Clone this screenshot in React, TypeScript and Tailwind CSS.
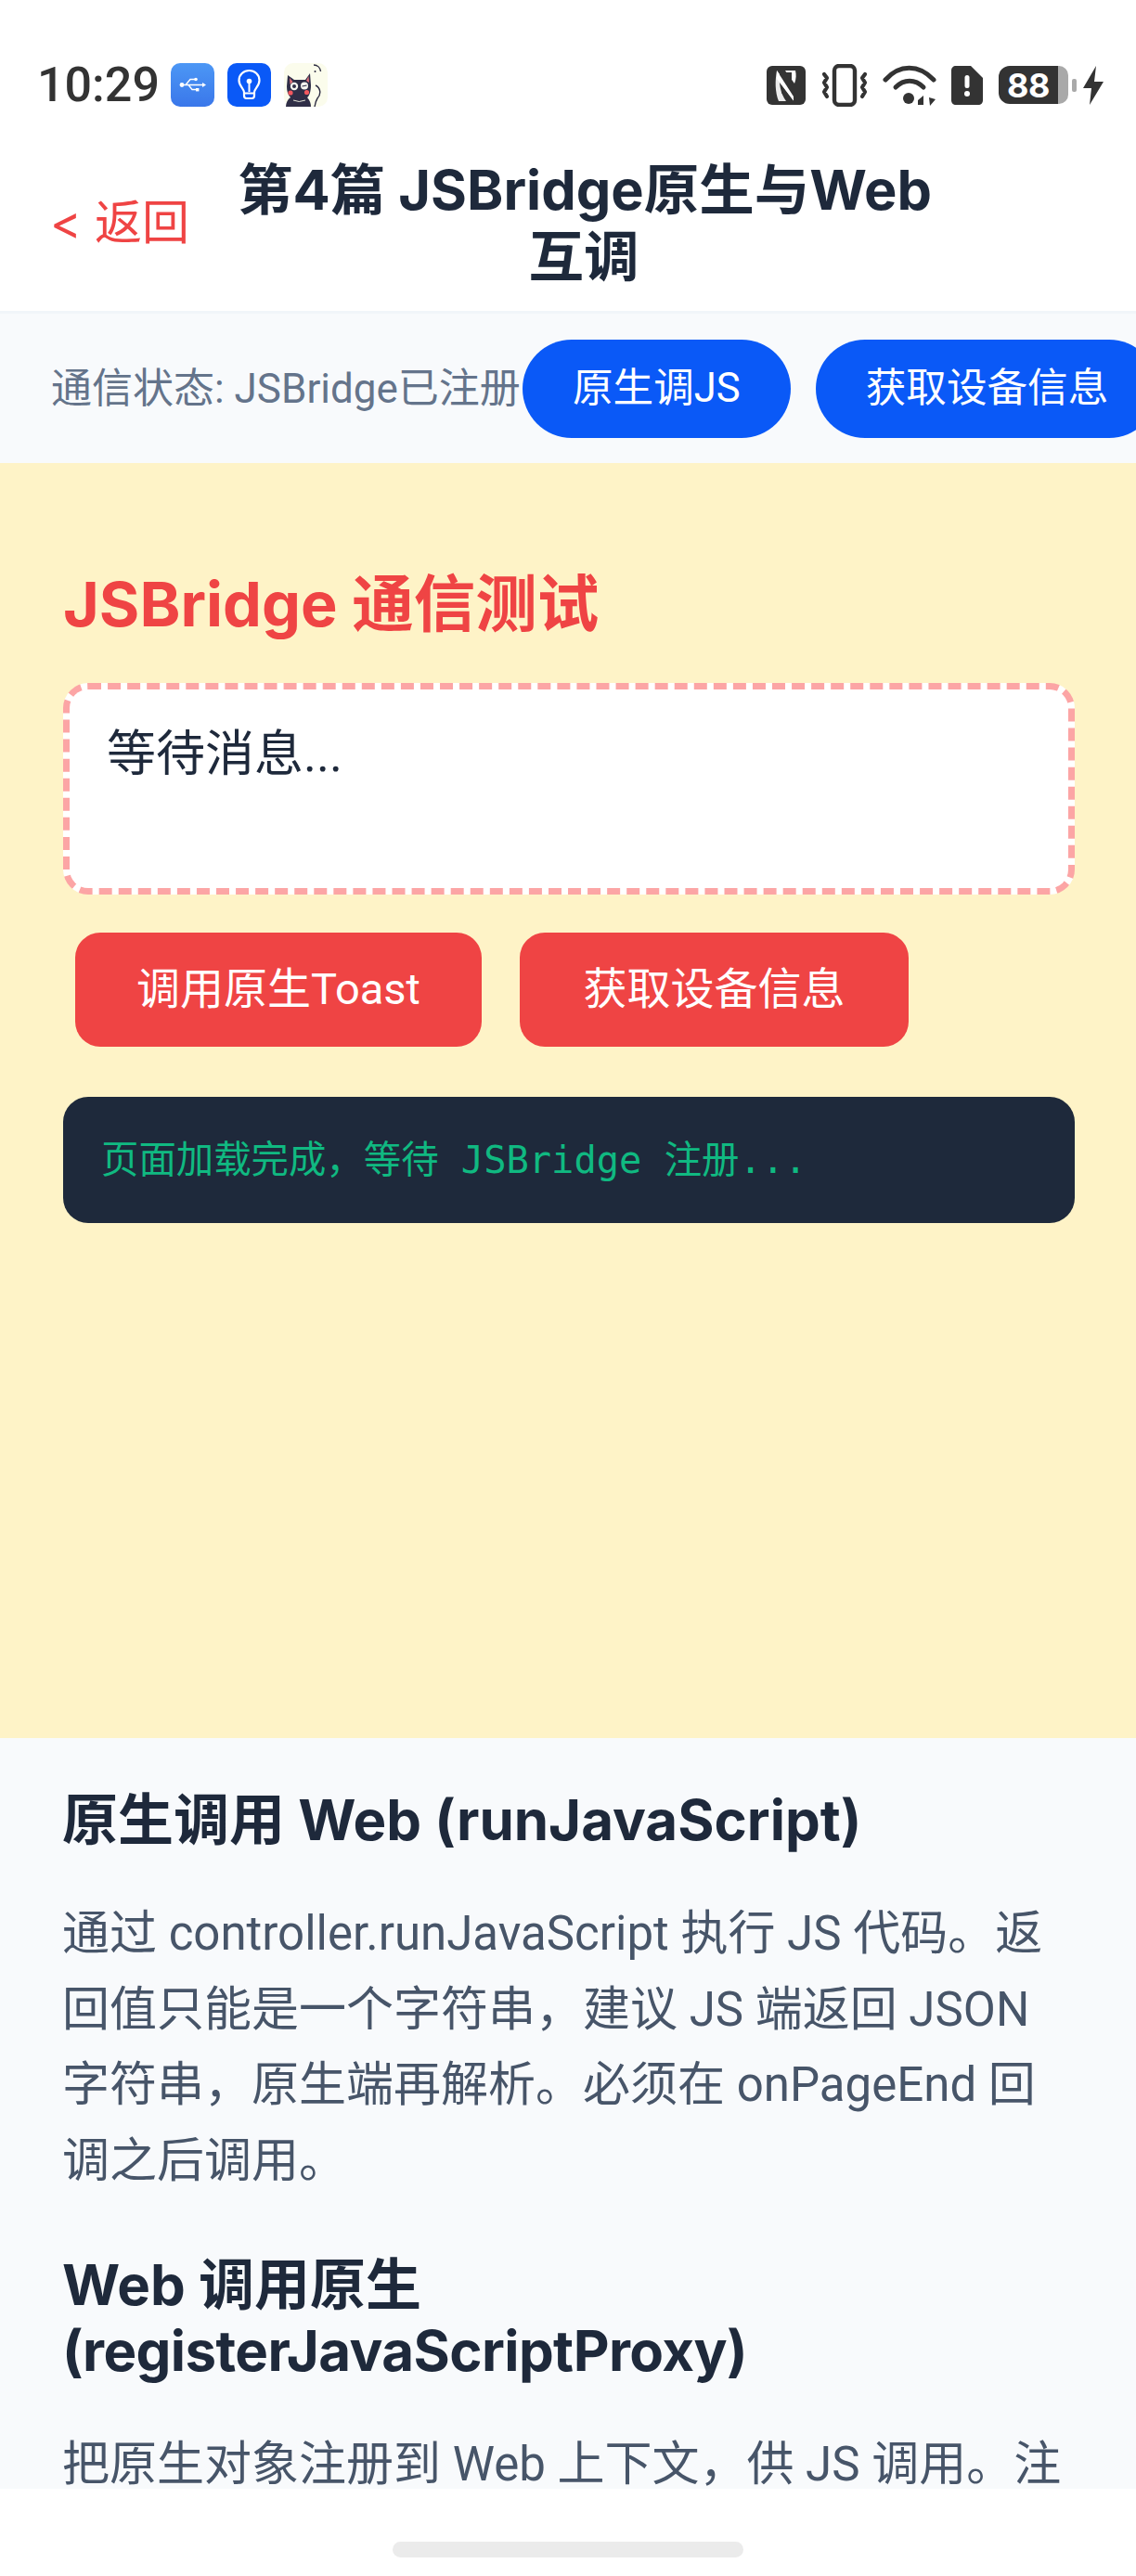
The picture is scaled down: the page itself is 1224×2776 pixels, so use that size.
import React from "react";

const sans = "font-['Roboto','Noto_Sans_CJK_SC',sans-serif]";
const heading = "font-['Inter','Noto_Sans_CJK_SC',sans-serif] font-bold";

const UsbIcon: React.FC = () => (
  <svg width="47" height="47" viewBox="0 0 47 47">
    <defs>
      <linearGradient id="usbBg" x1="0" y1="0" x2="0" y2="1">
        <stop offset="0" stopColor="#4c97f5" />
        <stop offset="1" stopColor="#3a77ea" />
      </linearGradient>
    </defs>
    <rect width="47" height="47" rx="10" fill="url(#usbBg)" />
    <path d="M11 23.5H35M16 23.5L21 17.5H26M19 23.5L23 28.5H28" fill="none" stroke="#fff" strokeWidth="1.4" />
    <circle cx="12" cy="23.5" r="2.4" fill="#fff" />
    <circle cx="27" cy="17.5" r="1.8" fill="#fff" />
    <rect x="27" y="27" width="3.4" height="3.4" fill="#fff" />
    <path d="M34 21L38 23.5L34 26Z" fill="#fff" />
  </svg>
);

const BulbIcon: React.FC = () => (
  <svg width="47" height="47" viewBox="0 0 47 47">
    <rect width="47" height="47" rx="10" fill="#0a59f7" />
    <path
      d="M18 31.5C18 27.5 12.5 25 12.5 18.5C12.5 12.5 17.5 8 23.5 8C29.5 8 34.5 12.5 34.5 18.5C34.5 25 29 27.5 29 31.5V35C29 37 28 38 26.5 38H20.5C19 38 18 37 18 35Z"
      fill="none"
      stroke="#fff"
      strokeWidth="2.2"
    />
    <path d="M18 32.5H29" stroke="#fff" strokeWidth="2" />
    <path d="M23.5 20V31" stroke="#fff" strokeWidth="2" />
    <circle cx="23.5" cy="19.5" r="2.8" fill="#fff" />
  </svg>
);

const CatIcon: React.FC = () => (
  <svg width="47" height="47" viewBox="0 0 47 47">
    <rect width="47" height="47" rx="10" fill="#fbfcec" />
    <path d="M32 2C36 2 39 5 39.5 9" fill="none" stroke="#2d2c42" strokeWidth="1.4" />
    <circle cx="33.5" cy="9" r="1" fill="#2d2c42" />
    <path d="M34 24C40 27 40 34 36 38C34 41 33.5 44 33 47" fill="none" stroke="#2d2c42" strokeWidth="1.4" />
    <path
      d="M4 13L11 18H23L28 11L29 24C29 31 27 36 25 37C28 40 29 44 29 47H2C2 43 4 39 7 37C4 34 3 30 3 25Z"
      fill="#2f2e47"
    />
    <path d="M6 16L9.5 20L6.5 23Z" fill="#e5727c" />
    <path d="M26.5 14L24 19L27 21Z" fill="#e5727c" />
    <circle cx="11" cy="25" r="4.2" fill="#f5f5f0" />
    <circle cx="11" cy="25" r="2" fill="#2f2e47" />
    <circle cx="22" cy="24.5" r="4" fill="#f5f5f0" />
    <path d="M19.5 25L24.5 24" stroke="#2f2e47" strokeWidth="1.2" />
    <circle cx="7" cy="32" r="2.6" fill="#f2585f" />
    <circle cx="24.5" cy="31.5" r="2.6" fill="#f2585f" />
    <path d="M10 40Q16 43 23 40" fill="none" stroke="#e6e6da" strokeWidth="1" />
  </svg>
);

const NfcIcon: React.FC = () => (
  <svg width="42" height="42" viewBox="0 0 42 42">
    <rect width="42" height="42" rx="6" fill="#333" />
    <path d="M11 5L29 33V38L11 14Z" fill="#fff" />
    <path d="M11 5C9 16 9 28 13 38H21C15 30 13 18 14 9Z" fill="#fff" opacity="0.9" />
    <path d="M31 5H20L30 19C32 14 32 9 31 5Z" fill="#fff" />
    <path d="M16 21L29 38H23L16 29Z" fill="#333" />
    <path d="M19 7L27 19V7Z" fill="#333" />
  </svg>
);

const VibrateIcon: React.FC = () => (
  <svg width="50" height="46" viewBox="0 0 50 46">
    <rect x="14" y="2" width="22" height="42" rx="5" fill="none" stroke="#333" strokeWidth="4.4" />
    <path
      d="M3 11L6 15L3 20L6 25L3 30L6 35M47 11L44 15L47 20L44 25L47 30L44 35"
      fill="none"
      stroke="#333"
      strokeWidth="4.2"
      strokeLinecap="round"
      strokeLinejoin="round"
    />
  </svg>
);

const WifiIcon: React.FC = () => (
  <svg width="58" height="44" viewBox="0 0 58 44">
    <path d="M3 16C18 -1 39 -1 55 16" fill="none" stroke="#333" strokeWidth="5" strokeLinecap="round" />
    <path d="M14 24C23 15 35 15 44 24" fill="none" stroke="#333" strokeWidth="5" strokeLinecap="round" />
    <circle cx="28" cy="36" r="6" fill="#333" />
    <path d="M38 38L44 33V43H38ZM48 32V44M50 35L57 37L51 44Z" fill="#333" />
  </svg>
);

const SimIcon: React.FC = () => (
  <svg width="34" height="42" viewBox="0 0 34 42">
    <path d="M5 0H21L34 13V37C34 40 32 42 29 42H5C2 42 0 40 0 37V5C0 2 2 0 5 0Z" fill="#333" />
    <rect x="14.5" y="10" width="5" height="14" rx="2.5" fill="#fff" />
    <circle cx="17" cy="30" r="3" fill="#fff" />
  </svg>
);

const BatteryIcon: React.FC = () => (
  <div className="flex items-center">
    <div className="flex">
      <div className="h-[41px] w-[64px] rounded-l-[12px] bg-[#333] flex items-center justify-center">
        <span className="font-['Inter',sans-serif] font-bold text-[36px] leading-[36px] text-white tracking-[-0.5px]">
          88
        </span>
      </div>
      <div className="h-[41px] w-[11px] rounded-r-[10px] bg-[#a9a9a9]" />
    </div>
    <div className="w-[5px] h-[14px] ml-[4px] rounded-[2px] bg-[#a9a9a9]" />
  </div>
);

const BoltIcon: React.FC = () => (
  <svg width="22" height="42" viewBox="0 0 22 42">
    <path d="M14 0L0 24H9L7 42L22 17H12Z" fill="#333" />
  </svg>
);

const StatusBar: React.FC = () => (
  <div className="h-[140px] pt-[68px] pl-[40px] flex items-start shrink-0 bg-white">
    <span className="font-['Roboto',sans-serif] font-medium text-[52px] leading-[47px] text-[#333] w-[144px]">
      10:29
    </span>
    <div className="flex gap-[14px]">
      <UsbIcon />
      <BulbIcon />
      <CatIcon />
    </div>
    <div className="flex items-center ml-[473px] h-[47px]">
      <NfcIcon />
      <div className="w-[17px]" />
      <VibrateIcon />
      <div className="w-[16px]" />
      <WifiIcon />
      <div className="w-[16px]" />
      <SimIcon />
      <div className="w-[17px]" />
      <BatteryIcon />
      <div className="w-[7px]" />
      <BoltIcon />
    </div>
  </div>
);

const App: React.FC = () => {
  return (
    <div className={`${sans} w-[1224px] h-[2776px] flex flex-col overflow-hidden bg-white`}>
      <StatusBar />
      <div className="h-[198px] shrink-0 flex items-center border-b-[3px] border-[#f1f5f9] pl-[54px] pt-[4px] bg-white">
        <span className="font-['Inter','Noto_Sans_CJK_SC',sans-serif] text-[51px] leading-[60px] text-[#ef4444] w-[202px] shrink-0">
          &lt; 返回
        </span>
        <h1 className={`${heading} w-[746px] shrink-0 whitespace-nowrap text-center text-[59.5px] leading-[72px] text-[#1e293b]`}>
          第4篇 JSBridge原生与Web
          <br />
          互调
        </h1>
      </div>
      <div className="h-[161px] shrink-0 bg-[#f8fafc] flex items-center pl-[55px] overflow-hidden">
        <span className="text-[44px] text-[#64748b] w-[508px] shrink-0 whitespace-nowrap">
          通信状态: JSBridge已注册
        </span>
        <button className="shrink-0 h-[106px] px-[54px] rounded-full bg-[#0a59f7] text-white text-[43.6px]">
          原生调JS
        </button>
        <button className="shrink-0 h-[106px] px-[54px] ml-[27px] rounded-full bg-[#0a59f7] text-white text-[43.6px]">
          获取设备信息
        </button>
      </div>
      <div className="h-[1374px] shrink-0 bg-[#fef3c7] pl-[68px] pr-[66px] pt-[114px]">
        <h2 className={`${heading} leading-[76px] text-[#ef4444] text-[66.5px]`}>JSBridge 通信测试</h2>
        <div className="mt-[47px] h-[228px] rounded-[27px] border-[7px] border-dashed border-[#fca5a5] bg-white px-[40px] pt-[38px] text-[53px] leading-[64px] text-[#1e293b]">
          等待消息...
        </div>
        <div className="flex mt-[41px] ml-[13px] gap-[41px]">
          <button className="h-[123px] w-[438px] rounded-[27px] bg-[#ef4444] text-white text-[47px]">
            调用原生Toast
          </button>
          <button className="h-[123px] w-[419px] rounded-[27px] bg-[#ef4444] text-white text-[47px]">
            获取设备信息
          </button>
        </div>
        <div className="mt-[54px] h-[136px] rounded-[27px] bg-[#1e293b] px-[41px] flex items-center text-[40.4px] text-[#10b981] font-['DejaVu_Sans_Mono','Noto_Sans_CJK_SC',monospace]">
          页面加载完成，等待 JSBridge 注册...
        </div>
      </div>
      <div className="h-[809px] shrink-0 bg-[#f8fafc] pl-[67px] pr-[68px] pt-[52px]">
        <h3 className={`${heading} text-[60px] leading-[72px] text-[#1e293b]`}>原生调用 Web (runJavaScript)</h3>
        <p className="mt-[46px] text-[51px] leading-[81.6px] text-[#475569] whitespace-nowrap">
          通过 controller.runJavaScript 执行 JS 代码。返
          <br />
          回值只能是一个字符串，建议 JS 端返回 JSON
          <br />
          字符串，原生端再解析。必须在 onPageEnd 回
          <br />
          调之后调用。
        </p>
        <h3 className={`${heading} mt-[58px] text-[60px] leading-[71px] text-[#1e293b]`}>
          Web 调用原生
          <br />
          <span className="tracking-[-0.6px]">(registerJavaScriptProxy)</span>
        </h3>
        <p className="mt-[65px] text-[51px] leading-[44px] text-[#475569] whitespace-nowrap">
          把原生对象注册到 Web 上下文，供 JS 调用。注
        </p>
      </div>
      <div className="relative flex-1 bg-white flex justify-center pt-[57px]">
        <div className="w-[378px] h-[17px] rounded-full bg-[#ebebeb]" />
      </div>
    </div>
  );
};

export default App;
